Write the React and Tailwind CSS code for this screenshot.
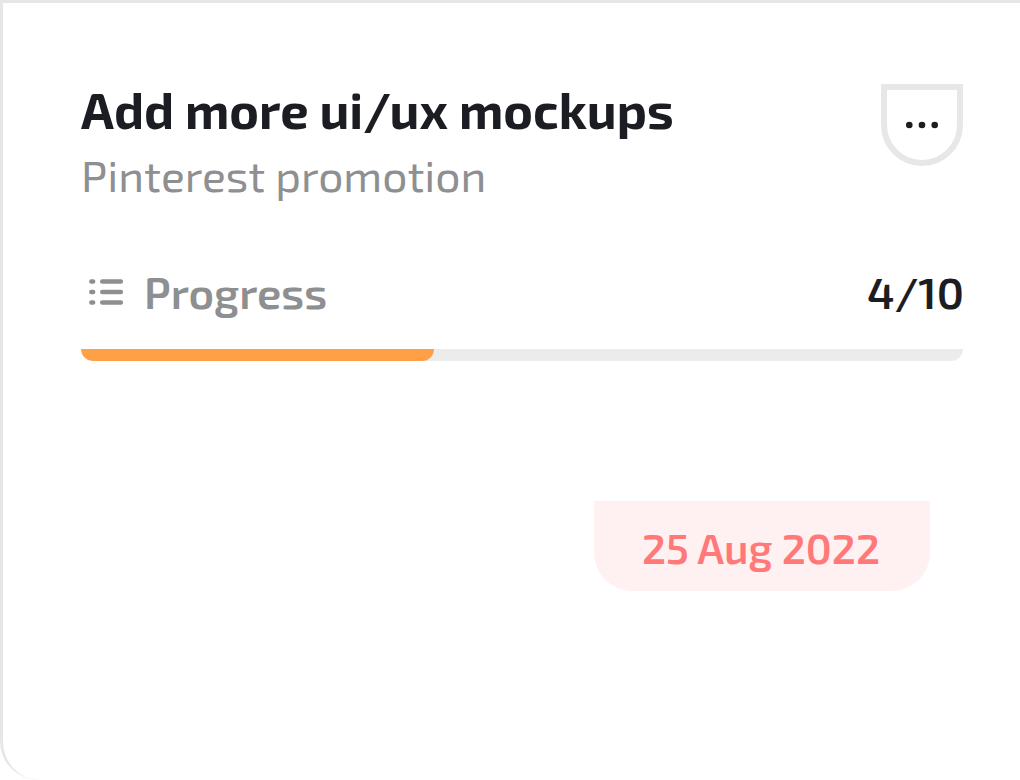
/*
Task card with title, progress and due date.
*/

import React from "react";

const task = {
  title: "Add more ui/ux mockups",
  project: "Pinterest promotion",
  done: 4,
  total: 10,
  dueDate: "25 Aug 2022",
};

// Bulleted list icon
function ListIcon() {
  return (
    <svg
      width="36"
      height="28"
      viewBox="0 0 36 28"
      fill="none"
      stroke="#8e8f91"
      strokeWidth="4.4"
      strokeLinecap="round"
    >
      <path d="M3.3 3.5H5.2M3.3 14H5.2M3.3 24.5H5.2" />
      <path d="M14.2 3.5H32.9M14.2 14H32.9M14.2 24.5H32.9" />
    </svg>
  );
}

// Three dots menu button
function MenuButton() {
  return (
    <button
      aria-label="Task menu"
      className="flex h-[82px] w-[82px] shrink-0 items-center justify-center rounded-b-[41px] border-[6px] border-[#e7e7e7]"
    >
      <svg width="34" height="8" viewBox="0 0 34 8" fill="#1c1d22">
        <circle cx="4.3" cy="4" r="3.3" />
        <circle cx="17" cy="4" r="3.3" />
        <circle cx="29.7" cy="4" r="3.3" />
      </svg>
    </button>
  );
}

function App() {

  const percent = (task.done / task.total) * 100;

  return (

    <div className="h-[780px] w-[1020px] overflow-hidden rounded-bl-[39px] border-t-[3px] border-l-[3px] border-[#e6e6e6] bg-white pt-[81px] pr-[57px] pl-[78px] font-['Exo_2',Roboto,sans-serif]">

      {/* HEADER */}
      <div className="flex h-[180px] items-start justify-between">

        <div className="whitespace-nowrap">
          <h1 className="h-[66px] text-[50.4px] leading-[51px] font-bold text-[#1c1d22]">
            {task.title}
          </h1>
          <p className="text-[44.4px] leading-[50px] text-[#8e8f91]">
            {task.project}
          </p>
        </div>

        <MenuButton />

      </div>

      {/* PROGRESS */}
      <div className="flex h-[84px] justify-between leading-[55px]">

        <div className="flex">
          <div className="mt-[14px] mr-[20px] ml-[7px]">
            <ListIcon />
          </div>
          <span className="text-[44px] font-semibold text-[#8e8f91]">
            Progress
          </span>
        </div>

        <span className="-mr-[1px] text-[44px] font-semibold text-[#1c1d22]">
          {task.done}/{task.total}
        </span>

      </div>

      <div className="mt-[0.5px] h-[12.5px] overflow-hidden rounded-b-[12px] bg-[#ececec]">
        <div
          className="h-full rounded-b-[12px] bg-[#ff9f46]"
          style={{ width: `${percent}%` }}
        />
      </div>

      {/* DUE DATE */}
      <div className="mt-[140px] mr-[33px] flex justify-end">
        <div className="h-[90px] w-[336px] rounded-b-[38px] bg-[#fff0f1] pr-[2px] text-center text-[42px] leading-[93px] font-semibold whitespace-nowrap text-[#ff7979]">
          {task.dueDate}
        </div>
      </div>

    </div>

  );

}

export default App;
